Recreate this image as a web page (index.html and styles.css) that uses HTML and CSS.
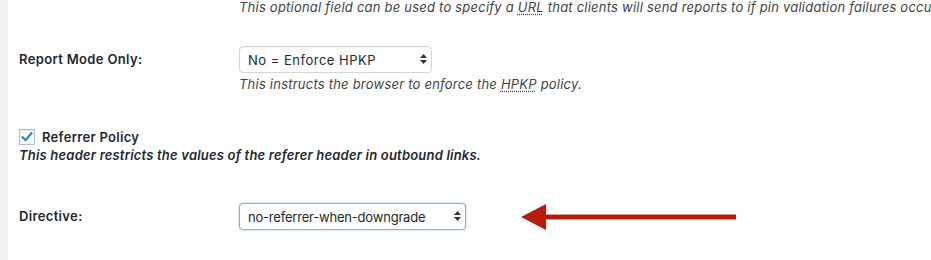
FILE: index.html
```html
<!DOCTYPE html>
<html>
<head>
<meta charset="utf-8">
<link rel="stylesheet" href="styles.css">
</head>
<body>
<div class="page">
  <div class="strip"></div>
  <div class="content">
    <p class="desc top-desc">This optional field can be used to specify a <abbr>URL</abbr> that clients will send reports to if pin validation failures occur.</p>

    <div class="row row-report">
      <div class="label">Report Mode Only:</div>
      <div class="field">
        <span class="select-wrap w1">
          <select class="select"><option>No = Enforce HPKP</option></select>
          <svg class="updown" width="7" height="10" viewBox="0 0 7 10"><path d="M3.5 0 L7 4 L0 4 Z M0 6 L7 6 L3.5 10 Z" fill="#333"/></svg>
        </span>
        <p class="desc under">This instructs the browser to enforce the <abbr>HPKP</abbr> policy.</p>
      </div>
    </div>

    <div class="check-row">
      <span class="checkbox"><svg width="14" height="14" viewBox="0 0 14 14"><path d="M2.6 7.2 L5.6 10.2 L11.4 3.2" fill="none" stroke="#1e8cbe" stroke-width="2.2" stroke-linecap="square"/></svg></span>
      <span class="check-label">Referrer Policy</span>
    </div>
    <p class="header-desc">This header restricts the values of the referer header in outbound links.</p>

    <div class="row row-directive">
      <div class="label">Directive:</div>
      <div class="field">
        <span class="select-wrap w2 focus">
          <select class="select"><option>no-referrer-when-downgrade</option></select>
          <svg class="updown" width="7" height="10" viewBox="0 0 7 10"><path d="M3.5 0 L7 4 L0 4 Z M0 6 L7 6 L3.5 10 Z" fill="#333"/></svg>
        </span>
      </div>
    </div>
  </div>
</div>
<svg class="annot-arrow" width="220" height="30" viewBox="0 0 220 30"><path d="M0 13 L25 0 L25 10.5 L215 10.5 L215 15.5 L25 15.5 L25 26 Z" fill="#b51d08"/></svg>
</body>
</html>
```

FILE: styles.css
```css
html, body {
  margin: 0;
  padding: 0;
  background: #fff;
  overflow: hidden;
  height: 260px;
}
body {
  font-family: Inter, "Noto Sans", "Liberation Sans", sans-serif;
  font-size: 13px;
  color: #23282d;
  position: relative;
}
.page {
  display: flex;
  height: 260px;
}
.strip {
  width: 8px;
  flex: none;
  background: #f1f1f1;
}
.content {
  flex: 1;
  padding-left: 11px;
  white-space: nowrap;
  overflow: hidden;
}
p { margin: 0; }
.desc {
  font-style: italic;
  color: #444;
  line-height: 18px;
  letter-spacing: 0.22px;
}
.top-desc {
  margin-top: -2px;
  padding-left: 220px;
}
abbr {
  text-decoration: underline dotted;
  text-underline-offset: 2px;
}
.row {
  display: flex;
}
.label {
  width: 220px;
  flex: none;
  font-weight: 600;
  line-height: 27px;
  letter-spacing: 0.35px;
}
.row-report {
  margin-top: 30px;
}
.field {
  display: flex;
  flex-direction: column;
  align-items: flex-start;
}
.select-wrap {
  position: relative;
  display: block;
  height: 27px;
}
.w1 { width: 193px; }
.w2 { width: 227px; }
.select {
  appearance: none;
  -webkit-appearance: none;
  width: 100%;
  height: 27px;
  box-sizing: border-box;
  margin: 0;
  padding: 0 24px 0 8px;
  font: inherit;
  letter-spacing: 0.5px;
  color: #23282d;
  background: #fff;
  border: 1px solid #d5d5d5;
  border-radius: 4px;
  box-shadow: inset 0 1px 2px rgba(0,0,0,.05);
  outline: none;
}
.w2 .select {
  letter-spacing: -0.2px;
}
.focus .select {
  border-color: #7eb4e6;
  box-shadow: 0 0 2px rgba(30,140,190,.6);
}
.updown {
  position: absolute;
  right: 5px;
  top: 8px;
  pointer-events: none;
}
.under {
  margin-top: 2px;
}
.check-row {
  display: flex;
  align-items: center;
  margin-top: 35px;
  height: 18px;
}
.checkbox {
  width: 14px;
  height: 14px;
  border: 1px solid #b4b9be;
  box-shadow: inset 0 1px 2px rgba(0,0,0,.1);
  background: #fff;
  display: flex;
  flex: none;
}
.check-label {
  margin-left: 7px;
  font-weight: 600;
  letter-spacing: 0.3px;
}
.header-desc {
  font-weight: 600;
  font-style: italic;
  line-height: 18px;
  margin-top: 0;
  letter-spacing: 0.2px;
}
.row-directive {
  margin-top: 39px;
}
.annot-arrow {
  position: absolute;
  left: 521px;
  top: 204px;
}
```
